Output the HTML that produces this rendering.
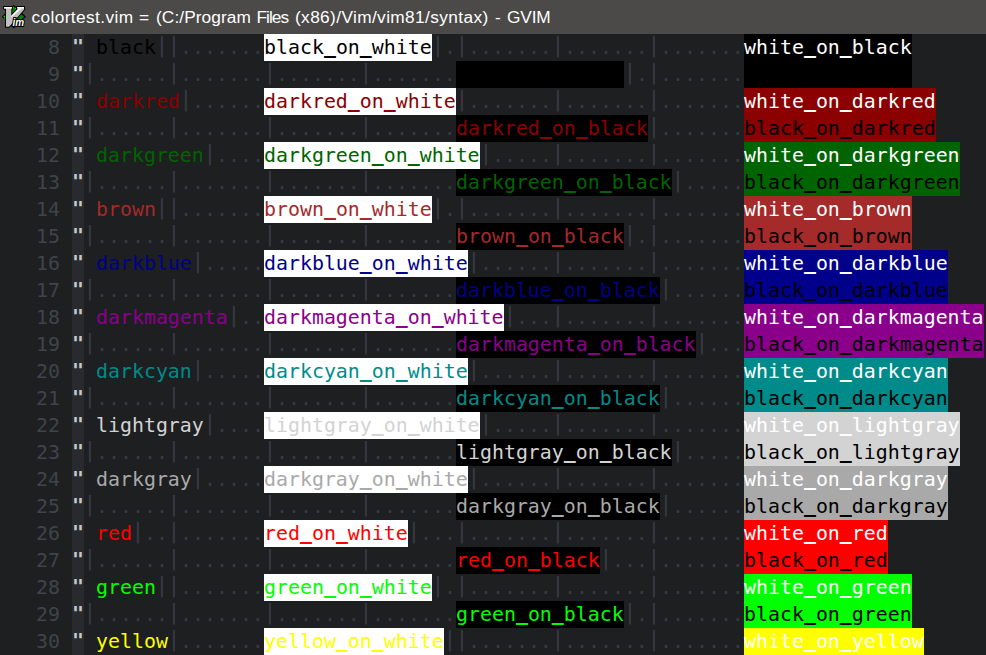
<!DOCTYPE html>
<html><head><meta charset="utf-8"><title>colortest.vim</title>
<style>
html,body{margin:0;padding:0;}
body{width:986px;height:655px;overflow:hidden;background:#1d1f21;position:relative;}
#title{position:absolute;left:0;top:0;width:986px;height:34px;background:#4b4a48;color:#fff;
 font-family:"Liberation Sans",sans-serif;font-size:17.3px;line-height:35px;white-space:nowrap;}
#title .tw{position:absolute;top:0;}
#cc{position:absolute;left:72px;top:34px;width:12px;height:621px;background:#282a2e;}
.r{position:absolute;left:0;width:986px;height:27px;font-family:"DejaVu Sans Mono","Liberation Mono",monospace;font-size:19.9px; line-height:27px;white-space:pre;}
.r span{position:absolute;top:0;height:27px;display:block;overflow:visible;}
.n{color:#40444a;text-align:right;}
.r span.q{color:#c5c8c6;font-weight:bold;top:-1px;}
.tb{color:#373b41;}
.r span.br{color:#373b41;width:12px;font-size:22px;line-height:27px;top:-3px;margin-left:-0.7px;text-align:center;}
.r i{font-style:normal;position:relative;top:-1px;text-shadow:0 -1px 0 currentColor;}
</style></head><body>
<div id="title"><svg width="24" height="24" viewBox="0 0 24 24" style="position:absolute;left:2px;top:5px">
<polygon points="11.8,0.7 23.1,11.7 11.8,22.7 0.7,11.7" fill="#008000" stroke="#000" stroke-width="1.3"/>
<polygon points="11.4,1.4 9.8,3 10.8,3.6 12,2.2" fill="#00ff00"/>
<polygon points="13.4,2.4 14.2,3.2 13.4,4 12.6,3.2" fill="#00ff00"/>
<polygon points="1.4,11.2 2.4,10.2 3,11.4 2,12.2" fill="#00ff00"/>
<polygon points="2.2,13 3,12.6 3.4,13.8 2.6,14.2" fill="#00ff00"/>
<polygon points="22.4,11.4 19,15.4 20,16 22.8,12.6" fill="#000090"/>
<polygon points="19.4,7.6 20.6,8.8 20,9.4 18.8,8.2" fill="#000090"/>
<polygon points="11,21.6 12.6,21.6 11.8,22.6" fill="#000090"/>
<polygon points="2,2 9.8,2 9.8,3.6 9.3,3.6 9.3,10.8 16.4,3.6 15.1,3.6 15.1,2 21.9,2 21.9,3.6 22.3,4.2 7.2,21.7 4,21.7 4,3.6 2,3.6" fill="#c0c0c0" stroke="#000" stroke-width="2" stroke-linejoin="miter" paint-order="stroke"/>
<polygon points="2,2 9.8,2 9.8,3.5 2,3.5" fill="#fff"/>
<polygon points="15.1,2 21.9,2 21.9,3.5 15.1,3.5" fill="#fff"/>
<polygon points="9.4,10.7 16.4,3.6 19.6,3.6 9.4,12.2" fill="#fff"/>
<text x="10.6" y="21.2" font-family="Liberation Sans, sans-serif" font-size="10" font-weight="bold" font-style="italic" fill="#fff" stroke="#000" stroke-width="2" paint-order="stroke" textLength="11.6" lengthAdjust="spacingAndGlyphs">im</text>
</svg>
<span class="tw" style="left:31.4px;letter-spacing:0.39px">colortest.vim</span><span class="tw" style="left:139.0px;letter-spacing:0.00px">=</span><span class="tw" style="left:156.0px;letter-spacing:0.08px">(C:/Program</span><span class="tw" style="left:256.4px;letter-spacing:-0.95px">Files</span><span class="tw" style="left:295.0px;letter-spacing:0.37px">(x86)/Vim/vim81/syntax)</span><span class="tw" style="left:495.0px;letter-spacing:0.00px">-</span><span class="tw" style="left:507.0px;letter-spacing:-0.17px">GVIM</span></div>
<div id="cc"></div>
<div class="r" style="top:34px"><span class="n" style="left:0;width:60px">8</span><span class="q" style="left:72px;width:12px">"</span><span style="left:96px;width:60px;color:#000000">black</span><span class="br" style="left:156px">|</span><span class="br" style="left:168px">|</span><span class="tb" style="left:180px;width:84px">.......</span><span style="left:264px;width:168px;color:#000000;background:#ffffff">black<i>_</i>on<i>_</i>white</span><span class="br" style="left:432px">|</span><span class="tb" style="left:444px;width:12px">.</span><span class="br" style="left:456px">|</span><span class="tb" style="left:468px;width:84px">.......</span><span class="br" style="left:552px">|</span><span class="tb" style="left:564px;width:84px">.......</span><span class="br" style="left:648px">|</span><span class="tb" style="left:660px;width:84px">.......</span><span style="left:744px;width:168px;color:#ffffff;background:#000000">white<i>_</i>on<i>_</i>black</span></div>
<div class="r" style="top:61px"><span class="n" style="left:0;width:60px">9</span><span class="q" style="left:72px;width:12px">"</span><span class="br" style="left:84px">|</span><span class="tb" style="left:96px;width:72px">......</span><span class="br" style="left:168px">|</span><span class="tb" style="left:180px;width:84px">.......</span><span class="br" style="left:264px">|</span><span class="tb" style="left:276px;width:84px">.......</span><span class="br" style="left:360px">|</span><span class="tb" style="left:372px;width:84px">.......</span><span style="left:456px;width:168px;color:#000000;background:#000000">black<i>_</i>on<i>_</i>black</span><span class="br" style="left:624px">|</span><span class="tb" style="left:636px;width:12px">.</span><span class="br" style="left:648px">|</span><span class="tb" style="left:660px;width:84px">.......</span><span style="left:744px;width:168px;color:#000000;background:#000000">black<i>_</i>on<i>_</i>black</span></div>
<div class="r" style="top:88px"><span class="n" style="left:0;width:60px">10</span><span class="q" style="left:72px;width:12px">"</span><span style="left:96px;width:84px;color:#8b0000">darkred</span><span class="br" style="left:180px">|</span><span class="tb" style="left:192px;width:72px">......</span><span style="left:264px;width:192px;color:#8b0000;background:#ffffff">darkred<i>_</i>on<i>_</i>white</span><span class="br" style="left:456px">|</span><span class="tb" style="left:468px;width:84px">.......</span><span class="br" style="left:552px">|</span><span class="tb" style="left:564px;width:84px">.......</span><span class="br" style="left:648px">|</span><span class="tb" style="left:660px;width:84px">.......</span><span style="left:744px;width:192px;color:#ffffff;background:#8b0000">white<i>_</i>on<i>_</i>darkred</span></div>
<div class="r" style="top:115px"><span class="n" style="left:0;width:60px">11</span><span class="q" style="left:72px;width:12px">"</span><span class="br" style="left:84px">|</span><span class="tb" style="left:96px;width:72px">......</span><span class="br" style="left:168px">|</span><span class="tb" style="left:180px;width:84px">.......</span><span class="br" style="left:264px">|</span><span class="tb" style="left:276px;width:84px">.......</span><span class="br" style="left:360px">|</span><span class="tb" style="left:372px;width:84px">.......</span><span style="left:456px;width:192px;color:#8b0000;background:#000000">darkred<i>_</i>on<i>_</i>black</span><span class="br" style="left:648px">|</span><span class="tb" style="left:660px;width:84px">.......</span><span style="left:744px;width:192px;color:#000000;background:#8b0000">black<i>_</i>on<i>_</i>darkred</span></div>
<div class="r" style="top:142px"><span class="n" style="left:0;width:60px">12</span><span class="q" style="left:72px;width:12px">"</span><span style="left:96px;width:108px;color:#006400">darkgreen</span><span class="br" style="left:204px">|</span><span class="tb" style="left:216px;width:48px">....</span><span style="left:264px;width:216px;color:#006400;background:#ffffff">darkgreen<i>_</i>on<i>_</i>white</span><span class="br" style="left:480px">|</span><span class="tb" style="left:492px;width:60px">.....</span><span class="br" style="left:552px">|</span><span class="tb" style="left:564px;width:84px">.......</span><span class="br" style="left:648px">|</span><span class="tb" style="left:660px;width:84px">.......</span><span style="left:744px;width:216px;color:#ffffff;background:#006400">white<i>_</i>on<i>_</i>darkgreen</span></div>
<div class="r" style="top:169px"><span class="n" style="left:0;width:60px">13</span><span class="q" style="left:72px;width:12px">"</span><span class="br" style="left:84px">|</span><span class="tb" style="left:96px;width:72px">......</span><span class="br" style="left:168px">|</span><span class="tb" style="left:180px;width:84px">.......</span><span class="br" style="left:264px">|</span><span class="tb" style="left:276px;width:84px">.......</span><span class="br" style="left:360px">|</span><span class="tb" style="left:372px;width:84px">.......</span><span style="left:456px;width:216px;color:#006400;background:#000000">darkgreen<i>_</i>on<i>_</i>black</span><span class="br" style="left:672px">|</span><span class="tb" style="left:684px;width:60px">.....</span><span style="left:744px;width:216px;color:#000000;background:#006400">black<i>_</i>on<i>_</i>darkgreen</span></div>
<div class="r" style="top:196px"><span class="n" style="left:0;width:60px">14</span><span class="q" style="left:72px;width:12px">"</span><span style="left:96px;width:60px;color:#a52a2a">brown</span><span class="br" style="left:156px">|</span><span class="br" style="left:168px">|</span><span class="tb" style="left:180px;width:84px">.......</span><span style="left:264px;width:168px;color:#a52a2a;background:#ffffff">brown<i>_</i>on<i>_</i>white</span><span class="br" style="left:432px">|</span><span class="tb" style="left:444px;width:12px">.</span><span class="br" style="left:456px">|</span><span class="tb" style="left:468px;width:84px">.......</span><span class="br" style="left:552px">|</span><span class="tb" style="left:564px;width:84px">.......</span><span class="br" style="left:648px">|</span><span class="tb" style="left:660px;width:84px">.......</span><span style="left:744px;width:168px;color:#ffffff;background:#a52a2a">white<i>_</i>on<i>_</i>brown</span></div>
<div class="r" style="top:223px"><span class="n" style="left:0;width:60px">15</span><span class="q" style="left:72px;width:12px">"</span><span class="br" style="left:84px">|</span><span class="tb" style="left:96px;width:72px">......</span><span class="br" style="left:168px">|</span><span class="tb" style="left:180px;width:84px">.......</span><span class="br" style="left:264px">|</span><span class="tb" style="left:276px;width:84px">.......</span><span class="br" style="left:360px">|</span><span class="tb" style="left:372px;width:84px">.......</span><span style="left:456px;width:168px;color:#a52a2a;background:#000000">brown<i>_</i>on<i>_</i>black</span><span class="br" style="left:624px">|</span><span class="tb" style="left:636px;width:12px">.</span><span class="br" style="left:648px">|</span><span class="tb" style="left:660px;width:84px">.......</span><span style="left:744px;width:168px;color:#000000;background:#a52a2a">black<i>_</i>on<i>_</i>brown</span></div>
<div class="r" style="top:250px"><span class="n" style="left:0;width:60px">16</span><span class="q" style="left:72px;width:12px">"</span><span style="left:96px;width:96px;color:#00008b">darkblue</span><span class="br" style="left:192px">|</span><span class="tb" style="left:204px;width:60px">.....</span><span style="left:264px;width:204px;color:#00008b;background:#ffffff">darkblue<i>_</i>on<i>_</i>white</span><span class="br" style="left:468px">|</span><span class="tb" style="left:480px;width:72px">......</span><span class="br" style="left:552px">|</span><span class="tb" style="left:564px;width:84px">.......</span><span class="br" style="left:648px">|</span><span class="tb" style="left:660px;width:84px">.......</span><span style="left:744px;width:204px;color:#ffffff;background:#00008b">white<i>_</i>on<i>_</i>darkblue</span></div>
<div class="r" style="top:277px"><span class="n" style="left:0;width:60px">17</span><span class="q" style="left:72px;width:12px">"</span><span class="br" style="left:84px">|</span><span class="tb" style="left:96px;width:72px">......</span><span class="br" style="left:168px">|</span><span class="tb" style="left:180px;width:84px">.......</span><span class="br" style="left:264px">|</span><span class="tb" style="left:276px;width:84px">.......</span><span class="br" style="left:360px">|</span><span class="tb" style="left:372px;width:84px">.......</span><span style="left:456px;width:204px;color:#00008b;background:#000000">darkblue<i>_</i>on<i>_</i>black</span><span class="br" style="left:660px">|</span><span class="tb" style="left:672px;width:72px">......</span><span style="left:744px;width:204px;color:#000000;background:#00008b">black<i>_</i>on<i>_</i>darkblue</span></div>
<div class="r" style="top:304px"><span class="n" style="left:0;width:60px">18</span><span class="q" style="left:72px;width:12px">"</span><span style="left:96px;width:132px;color:#8b008b">darkmagenta</span><span class="br" style="left:228px">|</span><span class="tb" style="left:240px;width:24px">..</span><span style="left:264px;width:240px;color:#8b008b;background:#ffffff">darkmagenta<i>_</i>on<i>_</i>white</span><span class="br" style="left:504px">|</span><span class="tb" style="left:516px;width:36px">...</span><span class="br" style="left:552px">|</span><span class="tb" style="left:564px;width:84px">.......</span><span class="br" style="left:648px">|</span><span class="tb" style="left:660px;width:84px">.......</span><span style="left:744px;width:240px;color:#ffffff;background:#8b008b">white<i>_</i>on<i>_</i>darkmagenta</span></div>
<div class="r" style="top:331px"><span class="n" style="left:0;width:60px">19</span><span class="q" style="left:72px;width:12px">"</span><span class="br" style="left:84px">|</span><span class="tb" style="left:96px;width:72px">......</span><span class="br" style="left:168px">|</span><span class="tb" style="left:180px;width:84px">.......</span><span class="br" style="left:264px">|</span><span class="tb" style="left:276px;width:84px">.......</span><span class="br" style="left:360px">|</span><span class="tb" style="left:372px;width:84px">.......</span><span style="left:456px;width:240px;color:#8b008b;background:#000000">darkmagenta<i>_</i>on<i>_</i>black</span><span class="br" style="left:696px">|</span><span class="tb" style="left:708px;width:36px">...</span><span style="left:744px;width:240px;color:#000000;background:#8b008b">black<i>_</i>on<i>_</i>darkmagenta</span></div>
<div class="r" style="top:358px"><span class="n" style="left:0;width:60px">20</span><span class="q" style="left:72px;width:12px">"</span><span style="left:96px;width:96px;color:#008b8b">darkcyan</span><span class="br" style="left:192px">|</span><span class="tb" style="left:204px;width:60px">.....</span><span style="left:264px;width:204px;color:#008b8b;background:#ffffff">darkcyan<i>_</i>on<i>_</i>white</span><span class="br" style="left:468px">|</span><span class="tb" style="left:480px;width:72px">......</span><span class="br" style="left:552px">|</span><span class="tb" style="left:564px;width:84px">.......</span><span class="br" style="left:648px">|</span><span class="tb" style="left:660px;width:84px">.......</span><span style="left:744px;width:204px;color:#ffffff;background:#008b8b">white<i>_</i>on<i>_</i>darkcyan</span></div>
<div class="r" style="top:385px"><span class="n" style="left:0;width:60px">21</span><span class="q" style="left:72px;width:12px">"</span><span class="br" style="left:84px">|</span><span class="tb" style="left:96px;width:72px">......</span><span class="br" style="left:168px">|</span><span class="tb" style="left:180px;width:84px">.......</span><span class="br" style="left:264px">|</span><span class="tb" style="left:276px;width:84px">.......</span><span class="br" style="left:360px">|</span><span class="tb" style="left:372px;width:84px">.......</span><span style="left:456px;width:204px;color:#008b8b;background:#000000">darkcyan<i>_</i>on<i>_</i>black</span><span class="br" style="left:660px">|</span><span class="tb" style="left:672px;width:72px">......</span><span style="left:744px;width:204px;color:#000000;background:#008b8b">black<i>_</i>on<i>_</i>darkcyan</span></div>
<div class="r" style="top:412px"><span class="n" style="left:0;width:60px">22</span><span class="q" style="left:72px;width:12px">"</span><span style="left:96px;width:108px;color:#d3d3d3">lightgray</span><span class="br" style="left:204px">|</span><span class="tb" style="left:216px;width:48px">....</span><span style="left:264px;width:216px;color:#d3d3d3;background:#ffffff">lightgray<i>_</i>on<i>_</i>white</span><span class="br" style="left:480px">|</span><span class="tb" style="left:492px;width:60px">.....</span><span class="br" style="left:552px">|</span><span class="tb" style="left:564px;width:84px">.......</span><span class="br" style="left:648px">|</span><span class="tb" style="left:660px;width:84px">.......</span><span style="left:744px;width:216px;color:#ffffff;background:#d3d3d3">white<i>_</i>on<i>_</i>lightgray</span></div>
<div class="r" style="top:439px"><span class="n" style="left:0;width:60px">23</span><span class="q" style="left:72px;width:12px">"</span><span class="br" style="left:84px">|</span><span class="tb" style="left:96px;width:72px">......</span><span class="br" style="left:168px">|</span><span class="tb" style="left:180px;width:84px">.......</span><span class="br" style="left:264px">|</span><span class="tb" style="left:276px;width:84px">.......</span><span class="br" style="left:360px">|</span><span class="tb" style="left:372px;width:84px">.......</span><span style="left:456px;width:216px;color:#d3d3d3;background:#000000">lightgray<i>_</i>on<i>_</i>black</span><span class="br" style="left:672px">|</span><span class="tb" style="left:684px;width:60px">.....</span><span style="left:744px;width:216px;color:#000000;background:#d3d3d3">black<i>_</i>on<i>_</i>lightgray</span></div>
<div class="r" style="top:466px"><span class="n" style="left:0;width:60px">24</span><span class="q" style="left:72px;width:12px">"</span><span style="left:96px;width:96px;color:#a9a9a9">darkgray</span><span class="br" style="left:192px">|</span><span class="tb" style="left:204px;width:60px">.....</span><span style="left:264px;width:204px;color:#a9a9a9;background:#ffffff">darkgray<i>_</i>on<i>_</i>white</span><span class="br" style="left:468px">|</span><span class="tb" style="left:480px;width:72px">......</span><span class="br" style="left:552px">|</span><span class="tb" style="left:564px;width:84px">.......</span><span class="br" style="left:648px">|</span><span class="tb" style="left:660px;width:84px">.......</span><span style="left:744px;width:204px;color:#ffffff;background:#a9a9a9">white<i>_</i>on<i>_</i>darkgray</span></div>
<div class="r" style="top:493px"><span class="n" style="left:0;width:60px">25</span><span class="q" style="left:72px;width:12px">"</span><span class="br" style="left:84px">|</span><span class="tb" style="left:96px;width:72px">......</span><span class="br" style="left:168px">|</span><span class="tb" style="left:180px;width:84px">.......</span><span class="br" style="left:264px">|</span><span class="tb" style="left:276px;width:84px">.......</span><span class="br" style="left:360px">|</span><span class="tb" style="left:372px;width:84px">.......</span><span style="left:456px;width:204px;color:#a9a9a9;background:#000000">darkgray<i>_</i>on<i>_</i>black</span><span class="br" style="left:660px">|</span><span class="tb" style="left:672px;width:72px">......</span><span style="left:744px;width:204px;color:#000000;background:#a9a9a9">black<i>_</i>on<i>_</i>darkgray</span></div>
<div class="r" style="top:520px"><span class="n" style="left:0;width:60px">26</span><span class="q" style="left:72px;width:12px">"</span><span style="left:96px;width:36px;color:#ff0000">red</span><span class="br" style="left:132px">|</span><span class="tb" style="left:144px;width:24px">..</span><span class="br" style="left:168px">|</span><span class="tb" style="left:180px;width:84px">.......</span><span style="left:264px;width:144px;color:#ff0000;background:#ffffff">red<i>_</i>on<i>_</i>white</span><span class="br" style="left:408px">|</span><span class="tb" style="left:420px;width:36px">...</span><span class="br" style="left:456px">|</span><span class="tb" style="left:468px;width:84px">.......</span><span class="br" style="left:552px">|</span><span class="tb" style="left:564px;width:84px">.......</span><span class="br" style="left:648px">|</span><span class="tb" style="left:660px;width:84px">.......</span><span style="left:744px;width:144px;color:#ffffff;background:#ff0000">white<i>_</i>on<i>_</i>red</span></div>
<div class="r" style="top:547px"><span class="n" style="left:0;width:60px">27</span><span class="q" style="left:72px;width:12px">"</span><span class="br" style="left:84px">|</span><span class="tb" style="left:96px;width:72px">......</span><span class="br" style="left:168px">|</span><span class="tb" style="left:180px;width:84px">.......</span><span class="br" style="left:264px">|</span><span class="tb" style="left:276px;width:84px">.......</span><span class="br" style="left:360px">|</span><span class="tb" style="left:372px;width:84px">.......</span><span style="left:456px;width:144px;color:#ff0000;background:#000000">red<i>_</i>on<i>_</i>black</span><span class="br" style="left:600px">|</span><span class="tb" style="left:612px;width:36px">...</span><span class="br" style="left:648px">|</span><span class="tb" style="left:660px;width:84px">.......</span><span style="left:744px;width:144px;color:#000000;background:#ff0000">black<i>_</i>on<i>_</i>red</span></div>
<div class="r" style="top:574px"><span class="n" style="left:0;width:60px">28</span><span class="q" style="left:72px;width:12px">"</span><span style="left:96px;width:60px;color:#00ff00">green</span><span class="br" style="left:156px">|</span><span class="br" style="left:168px">|</span><span class="tb" style="left:180px;width:84px">.......</span><span style="left:264px;width:168px;color:#00ff00;background:#ffffff">green<i>_</i>on<i>_</i>white</span><span class="br" style="left:432px">|</span><span class="tb" style="left:444px;width:12px">.</span><span class="br" style="left:456px">|</span><span class="tb" style="left:468px;width:84px">.......</span><span class="br" style="left:552px">|</span><span class="tb" style="left:564px;width:84px">.......</span><span class="br" style="left:648px">|</span><span class="tb" style="left:660px;width:84px">.......</span><span style="left:744px;width:168px;color:#ffffff;background:#00ff00">white<i>_</i>on<i>_</i>green</span></div>
<div class="r" style="top:601px"><span class="n" style="left:0;width:60px">29</span><span class="q" style="left:72px;width:12px">"</span><span class="br" style="left:84px">|</span><span class="tb" style="left:96px;width:72px">......</span><span class="br" style="left:168px">|</span><span class="tb" style="left:180px;width:84px">.......</span><span class="br" style="left:264px">|</span><span class="tb" style="left:276px;width:84px">.......</span><span class="br" style="left:360px">|</span><span class="tb" style="left:372px;width:84px">.......</span><span style="left:456px;width:168px;color:#00ff00;background:#000000">green<i>_</i>on<i>_</i>black</span><span class="br" style="left:624px">|</span><span class="tb" style="left:636px;width:12px">.</span><span class="br" style="left:648px">|</span><span class="tb" style="left:660px;width:84px">.......</span><span style="left:744px;width:168px;color:#000000;background:#00ff00">black<i>_</i>on<i>_</i>green</span></div>
<div class="r" style="top:628px"><span class="n" style="left:0;width:60px">30</span><span class="q" style="left:72px;width:12px">"</span><span style="left:96px;width:72px;color:#ffff00">yellow</span><span class="br" style="left:168px">|</span><span class="tb" style="left:180px;width:84px">.......</span><span style="left:264px;width:180px;color:#ffff00;background:#ffffff">yellow<i>_</i>on<i>_</i>white</span><span class="br" style="left:444px">|</span><span class="br" style="left:456px">|</span><span class="tb" style="left:468px;width:84px">.......</span><span class="br" style="left:552px">|</span><span class="tb" style="left:564px;width:84px">.......</span><span class="br" style="left:648px">|</span><span class="tb" style="left:660px;width:84px">.......</span><span style="left:744px;width:180px;color:#ffffff;background:#ffff00">white<i>_</i>on<i>_</i>yellow</span></div>
</body></html>
